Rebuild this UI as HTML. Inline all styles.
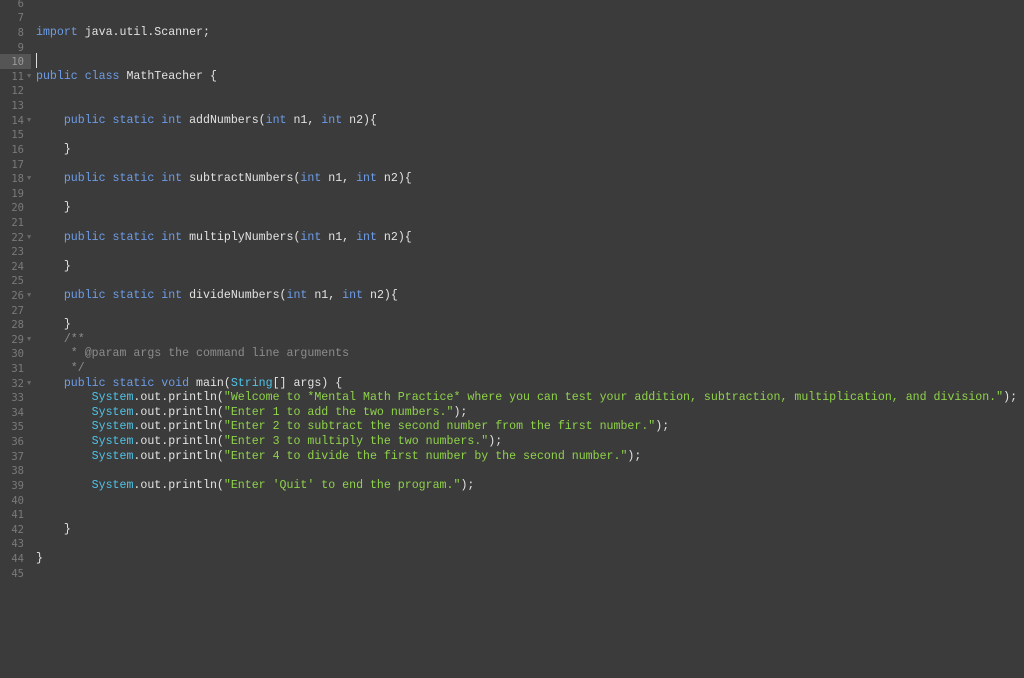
<!DOCTYPE html>
<html><head><style>
body{margin:0;background:#3b3b3b;width:1024px;height:678px;overflow:hidden;font-family:"Liberation Mono",monospace;font-size:11.6px;position:relative}
.g{position:absolute;left:0;top:-3.2px;width:24px;text-align:right;color:#7a7a7a;line-height:14.62px;font-family:"DejaVu Sans Mono",monospace;font-size:10.5px}
.g div,.code div{height:14.62px}
.fd{position:absolute;left:27px;top:-3.2px;color:#6a6a6a;font-size:7px;line-height:14.62px}
.fd div{height:14.62px}
.code{position:absolute;left:36px;top:-3.2px;color:#e2e2e2;line-height:14.62px;white-space:pre}
.k{color:#6d9ce6}.s{color:#8fd24a}.t{color:#4fc3e8}.m{color:#8c8c8c}
.hl{position:absolute;left:0;top:53.5px;width:31px;height:15px;background:#555}
.cur{position:absolute;left:36px;top:53px;width:1px;height:15px;background:#ddd}
</style></head><body>
<div class="hl"></div>
<div class="cur"></div>
<div class="g"><div>6</div><div>7</div><div>8</div><div>9</div><div style="color:#9a9a9a">10</div><div>11</div><div>12</div><div>13</div><div>14</div><div>15</div><div>16</div><div>17</div><div>18</div><div>19</div><div>20</div><div>21</div><div>22</div><div>23</div><div>24</div><div>25</div><div>26</div><div>27</div><div>28</div><div>29</div><div>30</div><div>31</div><div>32</div><div>33</div><div>34</div><div>35</div><div>36</div><div>37</div><div>38</div><div>39</div><div>40</div><div>41</div><div>42</div><div>43</div><div>44</div><div>45</div></div>
<div class="fd"><div></div><div></div><div></div><div></div><div></div><div>▼</div><div></div><div></div><div>▼</div><div></div><div></div><div></div><div>▼</div><div></div><div></div><div></div><div>▼</div><div></div><div></div><div></div><div>▼</div><div></div><div></div><div>▼</div><div></div><div></div><div>▼</div></div>
<div class="code"><div></div><div></div><div><span class="k">import</span> java.util.Scanner;</div><div></div><div></div><div><span class="k">public class</span> MathTeacher {</div><div></div><div></div><div>    <span class="k">public static int</span> addNumbers(<span class="k">int</span> n1, <span class="k">int</span> n2){</div><div></div><div>    }</div><div></div><div>    <span class="k">public static int</span> subtractNumbers(<span class="k">int</span> n1, <span class="k">int</span> n2){</div><div></div><div>    }</div><div></div><div>    <span class="k">public static int</span> multiplyNumbers(<span class="k">int</span> n1, <span class="k">int</span> n2){</div><div></div><div>    }</div><div></div><div>    <span class="k">public static int</span> divideNumbers(<span class="k">int</span> n1, <span class="k">int</span> n2){</div><div></div><div>    }</div><div>    <span class="m">/**</span></div><div><span class="m">     * @param args the command line arguments</span></div><div><span class="m">     */</span></div><div>    <span class="k">public static void</span> main(<span class="t">String</span>[] args) {</div><div>        <span class="t">System</span>.out.println(<span class="s">"Welcome to *Mental Math Practice* where you can test your addition, subtraction, multiplication, and division."</span>);</div><div>        <span class="t">System</span>.out.println(<span class="s">"Enter 1 to add the two numbers."</span>);</div><div>        <span class="t">System</span>.out.println(<span class="s">"Enter 2 to subtract the second number from the first number."</span>);</div><div>        <span class="t">System</span>.out.println(<span class="s">"Enter 3 to multiply the two numbers."</span>);</div><div>        <span class="t">System</span>.out.println(<span class="s">"Enter 4 to divide the first number by the second number."</span>);</div><div></div><div>        <span class="t">System</span>.out.println(<span class="s">"Enter 'Quit' to end the program."</span>);</div><div></div><div></div><div>    }</div><div></div><div>}</div><div></div></div>
</body></html>
